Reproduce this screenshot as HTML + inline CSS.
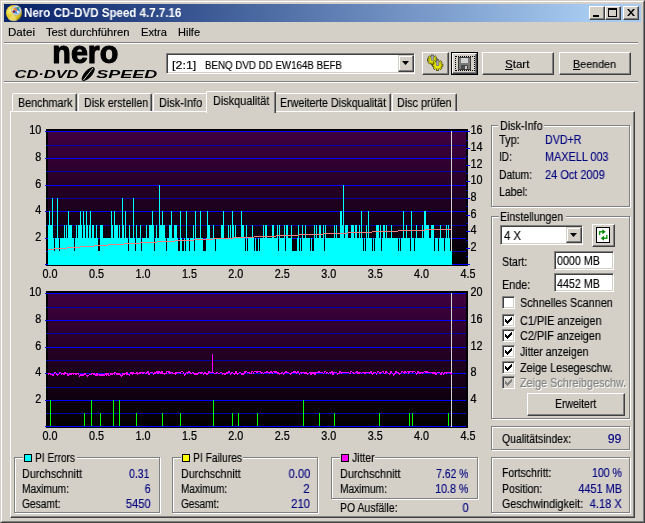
<!DOCTYPE html>
<html lang="de"><head><meta charset="utf-8"><title>Nero CD-DVD Speed 4.7.7.16</title>
<style>
*{box-sizing:border-box;margin:0;padding:0}
html,body{width:645px;height:523px;overflow:hidden;background:#d4d0c8}
body{position:relative;font-family:"Liberation Sans",sans-serif;font-size:12px;color:#000}
.a{position:absolute}
svg,#ttl{will-change:transform}
.t{-webkit-text-stroke:.15px;will-change:transform;position:absolute;white-space:nowrap;line-height:14px;font-size:12px;transform-origin:0 0;transform:scaleX(.92)}
.r{transform-origin:100% 0;text-align:right}
.m{font-size:11px;transform:none}
.v{color:#000080}
.grp{position:absolute;border:1px solid #808080;box-shadow:1px 1px 0 #fff, inset 1px 1px 0 #fff}
.lg{position:absolute;background:#d4d0c8;height:14px}
.btn{position:absolute;background:#d4d0c8;border:1px solid;border-color:#fff #404040 #404040 #fff;box-shadow:inset -1px -1px 0 #808080, inset 1px 1px 0 #d4d0c8}
.btn2{position:absolute;background:#d4d0c8;border:1px solid;border-color:#d4d0c8 #404040 #404040 #d4d0c8;box-shadow:inset -1px -1px 0 #808080, inset 1px 1px 0 #fff}
.sunk{position:absolute;background:#fff;border:1px solid;border-color:#808080 #fff #fff #808080;box-shadow:inset 1px 1px 0 #404040, inset -1px -1px 0 #d4d0c8}
.cb{position:absolute;width:13px;height:13px;background:#fff;border:1px solid;border-color:#808080 #fff #fff #808080;box-shadow:inset 1px 1px 0 #404040, inset -1px -1px 0 #d4d0c8}
.sep{position:absolute;height:2px;border-top:1px solid #808080;border-bottom:1px solid #fff}
.tab{position:absolute;background:#d4d0c8;border:1px solid;border-color:#fff #404040 transparent #fff;border-radius:2px 2px 0 0;box-shadow:inset -1px 0 0 #808080}
</style></head>
<body>
<div class="a" style="left:0;top:0;width:645px;height:523px;border:1px solid;border-color:#d4d0c8 #404040 #404040 #d4d0c8"></div>
<div class="a" style="left:1px;top:1px;width:643px;height:521px;border:1px solid;border-color:#fff #808080 #808080 #fff"></div>
<div class="a" style="left:4px;top:4px;width:637px;height:18px;background:linear-gradient(90deg,#0a246a 0%,#0a246a 3%,#a6caf0 92%,#a6caf0 100%)"></div>
<svg class="a" style="left:5px;top:4px" width="18" height="18" viewBox="0 0 18 18">
<defs><radialGradient id="g1" cx="30%" cy="35%" r="75%"><stop offset="0" stop-color="#fff68a"/><stop offset=".45" stop-color="#e6cf2a"/><stop offset=".8" stop-color="#d8c020"/><stop offset="1" stop-color="#8f7a10"/></radialGradient></defs>
<circle cx="9" cy="9" r="8" fill="url(#g1)"/>
<path d="M9 9 L3 15 A8 8 0 0 0 12 16.4z" fill="#f3e39a" opacity=".55"/>
<circle cx="11.3" cy="6.4" r="4.7" fill="#e6e8ee" stroke="#a9adb8" stroke-width=".9"/>
<circle cx="11.4" cy="6.5" r="3.3" fill="#2c8be0"/>
<path d="M9 4 L12.6 7.6" stroke="#ff7a4a" stroke-width="1.5"/><path d="M11.5 4.6 L9.8 6.4" stroke="#ff7a4a" stroke-width="1.2"/>
<circle cx="8.8" cy="7.6" r="1.2" fill="#a01010"/><circle cx="13.2" cy="4" r="1.1" fill="#2f9a3a"/><circle cx="8.5" cy="5.4" r=".8" fill="#ffe000"/><circle cx="12.9" cy="7.9" r="1.1" fill="#f4f8ff"/>
</svg>
<div class="a" style="left:23.7px;top:5px;font-weight:bold;font-size:12px;line-height:16px;color:#fff;white-space:nowrap;transform-origin:0 0;transform:scaleX(.963)" id="ttl">Nero CD-DVD Speed 4.7.7.16</div>
<div class="btn" style="left:589px;top:6px;width:16px;height:14px"></div>
<div class="btn" style="left:605px;top:6px;width:16px;height:14px"></div>
<div class="btn" style="left:623px;top:6px;width:16px;height:14px"></div>
<div class="a" style="left:593px;top:15px;width:6px;height:2px;background:#000"></div>
<div class="a" style="left:608px;top:8px;width:9px;height:9px;border:1px solid #000;border-top-width:2px"></div>
<svg class="a" style="left:627px;top:9px" width="8" height="7" viewBox="0 0 8 7"><path d="M0 0h2l2 2.5 2-2.5h2l-3 3.5 3 3.5h-2l-2-2.5-2 2.5h-2l3-3.5z" fill="#000"/></svg>
<div id="t1" class="t m" style="left:8.4px;top:25.0px;transform:scaleX(1.0511);">Datei</div>
<div id="t2" class="t m" style="left:45.9px;top:25.0px;transform:scaleX(1.0191);">Test durchführen</div>
<div id="t3" class="t m" style="left:140.9px;top:25.0px;transform:scaleX(1.0122);">Extra</div>
<div id="t4" class="t m" style="left:178.4px;top:25.0px;transform:scaleX(0.9993);">Hilfe</div>
<div class="sep" style="left:4px;top:42px;width:634px"></div>
<div class="sep" style="left:4px;top:81px;width:634px"></div>
<svg class="a" style="left:10px;top:44px" width="152" height="38" viewBox="0 0 152 38">
<text x="42.3" y="18.9" font-family="Liberation Sans,sans-serif" font-weight="bold" font-size="30.5" fill="#000" stroke="#000" stroke-width="1.1" stroke-linejoin="round" textLength="66" lengthAdjust="spacingAndGlyphs">nero</text>
<text x="4.5" y="34.3" font-family="Liberation Sans,sans-serif" font-weight="bold" font-style="italic" font-size="11" fill="#000" textLength="64" lengthAdjust="spacingAndGlyphs">CD·DVD</text>
<ellipse cx="78.2" cy="30" rx="8.8" ry="3.7" transform="rotate(-48 78.2 30)" fill="#000"/>
<path d="M73.5 36 L83 24" stroke="#d4d0c8" stroke-width="1"/>
<text x="86.3" y="34.3" font-family="Liberation Sans,sans-serif" font-weight="bold" font-style="italic" font-size="11" fill="#000" textLength="61" lengthAdjust="spacingAndGlyphs">SPEED</text>
</svg>
<div class="sunk" style="left:166px;top:53px;width:249px;height:21px"></div>
<div id="t5" class="t m" style="left:172.2px;top:57.5px;transform:scaleX(1.1352);">[2:1]</div>
<div id="t6" class="t m" style="left:205.4px;top:57.5px;transform:scaleX(0.8858);">BENQ DVD DD EW164B BEFB</div>
<div class="btn2" style="left:398px;top:55px;width:16px;height:17px"></div>
<svg class="a" style="left:402px;top:61px" width="7" height="4"><path d="M0 0h7l-3.5 4z" fill="#000"/></svg>
<div class="btn" style="left:422px;top:52px;width:27px;height:23px"></div>
<div class="a" style="left:451px;top:52px;width:27px;height:23px;border:1px solid #000"></div>
<div class="btn" style="left:452px;top:53px;width:25px;height:21px"></div>
<div class="btn" style="left:482px;top:52px;width:72px;height:23px"></div>
<div class="btn" style="left:559px;top:52px;width:72px;height:23px"></div>
<div id="t7" class="t m" style="left:505.0px;top:57.0px;transform:scaleX(1.0495);"><u>S</u>tart</div>
<div id="t8" class="t m" style="left:573.0px;top:57.0px;transform:scaleX(0.9782);"><u>B</u>eenden</div>
<svg class="a" style="left:422px;top:52px" width="27" height="23" viewBox="0 0 27 23"><g transform="translate(10.4,7.9)"><g fill="#e8e800" stroke="#2e2e00" stroke-width=".7"><rect x="-1.1" y="-4.9" width="2.2" height="2.2" transform="rotate(0)"/><rect x="-1.1" y="-4.9" width="2.2" height="2.2" transform="rotate(45)"/><rect x="-1.1" y="-4.9" width="2.2" height="2.2" transform="rotate(90)"/><rect x="-1.1" y="-4.9" width="2.2" height="2.2" transform="rotate(135)"/><rect x="-1.1" y="-4.9" width="2.2" height="2.2" transform="rotate(180)"/><rect x="-1.1" y="-4.9" width="2.2" height="2.2" transform="rotate(225)"/><rect x="-1.1" y="-4.9" width="2.2" height="2.2" transform="rotate(270)"/><rect x="-1.1" y="-4.9" width="2.2" height="2.2" transform="rotate(315)"/></g><circle r="3.4" fill="#e8e800" stroke="#8a8a00" stroke-width=".5"/><rect x="-1.3" y="-4.6" width="2.6" height="5.0" fill="#a8a8b8" stroke="#55556a" stroke-width=".5"/></g><g transform="translate(15.6,13.2)"><g fill="#e8e800" stroke="#2e2e00" stroke-width=".7"><rect x="-1.1" y="-5.3" width="2.2" height="2.2" transform="rotate(0)"/><rect x="-1.1" y="-5.3" width="2.2" height="2.2" transform="rotate(45)"/><rect x="-1.1" y="-5.3" width="2.2" height="2.2" transform="rotate(90)"/><rect x="-1.1" y="-5.3" width="2.2" height="2.2" transform="rotate(135)"/><rect x="-1.1" y="-5.3" width="2.2" height="2.2" transform="rotate(180)"/><rect x="-1.1" y="-5.3" width="2.2" height="2.2" transform="rotate(225)"/><rect x="-1.1" y="-5.3" width="2.2" height="2.2" transform="rotate(270)"/><rect x="-1.1" y="-5.3" width="2.2" height="2.2" transform="rotate(315)"/></g><circle r="3.8" fill="#e8e800" stroke="#8a8a00" stroke-width=".5"/><rect x="-1.3" y="-5.0" width="2.6" height="5.4" fill="#a8a8b8" stroke="#55556a" stroke-width=".5"/></g></svg>
<div class="a" style="left:455px;top:56px;width:20px;height:15px;border:1px dotted #000"></div>
<svg class="a" style="left:458px;top:56px" width="13" height="15" viewBox="0 0 13 15" shape-rendering="crispEdges">
<rect x="0" y="1" width="13" height="13" fill="#3a3a3a"/><rect x="1" y="2" width="11" height="11" fill="#7a7a7a"/>
<rect x="3" y="2" width="7" height="5" fill="#d2d2d2"/><rect x="3" y="9" width="7" height="4" fill="#4a4a4a"/><rect x="7" y="10" width="2" height="3" fill="#c8c8c8"/>
</svg>
<div class="tab" style="left:12px;top:93px;width:65px;height:19px"></div>
<div id="t9" class="t " style="left:18.0px;top:96px;transform:scaleX(0.8962);">Benchmark</div>
<div class="tab" style="left:78px;top:93px;width:74px;height:19px"></div>
<div id="t10" class="t " style="left:83.8px;top:96px;transform:scaleX(0.8913);">Disk erstellen</div>
<div class="tab" style="left:153px;top:93px;width:55px;height:19px"></div>
<div id="t11" class="t " style="left:158.8px;top:96px;transform:scaleX(0.9125);">Disk-Info</div>
<div class="tab" style="left:274px;top:93px;width:117px;height:19px"></div>
<div id="t12" class="t " style="left:279.6px;top:96px;transform:scaleX(0.8887);">Erweiterte Diskqualität</div>
<div class="tab" style="left:392px;top:93px;width:65px;height:19px"></div>
<div id="t13" class="t " style="left:397.2px;top:96px;transform:scaleX(0.8995);">Disc prüfen</div>
<div class="a" style="left:10px;top:111px;width:625px;height:407px;border:1px solid;border-color:#fff #404040 #404040 #fff;box-shadow:inset -1px -1px 0 #808080"></div>
<div class="tab" style="left:206px;top:91px;width:70px;height:22px;border-bottom:none"></div>
<div id="t14" class="t " style="left:212.7px;top:94px;transform:scaleX(0.9076);">Diskqualität</div>
<svg class="a" style="left:0;top:0" width="645" height="523" viewBox="0 0 645 523">
<defs><linearGradient id="bg" x1="0" y1="0" x2="0" y2="1"><stop offset="0" stop-color="#400040"/><stop offset="1" stop-color="#000000"/></linearGradient></defs>
<g shape-rendering="crispEdges">
<rect x="46" y="129" width="422" height="137" fill="#000"/>
<rect x="48" y="131" width="418" height="134" fill="url(#bg)"/>
<rect x="45" y="264" width="421" height="1" fill="#0000ff"/>
<rect x="46" y="251" width="420" height="1" fill="#0000a8"/>
<rect x="45" y="238" width="421" height="1" fill="#0000ff"/>
<rect x="46" y="225" width="420" height="1" fill="#0000a8"/>
<rect x="45" y="211" width="421" height="1" fill="#0000ff"/>
<rect x="46" y="198" width="420" height="1" fill="#0000a8"/>
<rect x="45" y="185" width="421" height="1" fill="#0000ff"/>
<rect x="46" y="171" width="420" height="1" fill="#0000a8"/>
<rect x="45" y="158" width="421" height="1" fill="#0000ff"/>
<rect x="46" y="145" width="420" height="1" fill="#0000a8"/>
<rect x="45" y="131" width="421" height="1" fill="#0000ff"/>
</g>
<g shape-rendering="crispEdges">
<rect x="451" y="131" width="1" height="134" fill="#d4d4d4"/>
<rect x="48" y="225" width="1" height="40" fill="#00ffff"/>
<rect x="49" y="211" width="1" height="54" fill="#00ffff"/>
<rect x="50" y="225" width="2" height="40" fill="#00ffff"/>
<rect x="52" y="198" width="1" height="67" fill="#00ffff"/>
<rect x="53" y="238" width="1" height="27" fill="#00ffff"/>
<rect x="54" y="251" width="1" height="14" fill="#00ffff"/>
<rect x="55" y="238" width="2" height="27" fill="#00ffff"/>
<rect x="57" y="198" width="1" height="67" fill="#00ffff"/>
<rect x="58" y="238" width="1" height="27" fill="#00ffff"/>
<rect x="59" y="251" width="1" height="14" fill="#00ffff"/>
<rect x="60" y="238" width="4" height="27" fill="#00ffff"/>
<rect x="64" y="225" width="1" height="40" fill="#00ffff"/>
<rect x="65" y="238" width="1" height="27" fill="#00ffff"/>
<rect x="66" y="225" width="1" height="40" fill="#00ffff"/>
<rect x="67" y="238" width="1" height="27" fill="#00ffff"/>
<rect x="68" y="211" width="1" height="54" fill="#00ffff"/>
<rect x="69" y="225" width="3" height="40" fill="#00ffff"/>
<rect x="72" y="238" width="2" height="27" fill="#00ffff"/>
<rect x="74" y="251" width="1" height="14" fill="#00ffff"/>
<rect x="75" y="238" width="1" height="27" fill="#00ffff"/>
<rect x="76" y="225" width="1" height="40" fill="#00ffff"/>
<rect x="77" y="238" width="1" height="27" fill="#00ffff"/>
<rect x="78" y="225" width="2" height="40" fill="#00ffff"/>
<rect x="80" y="211" width="1" height="54" fill="#00ffff"/>
<rect x="81" y="225" width="1" height="40" fill="#00ffff"/>
<rect x="82" y="238" width="1" height="27" fill="#00ffff"/>
<rect x="83" y="211" width="1" height="54" fill="#00ffff"/>
<rect x="84" y="225" width="1" height="40" fill="#00ffff"/>
<rect x="85" y="238" width="1" height="27" fill="#00ffff"/>
<rect x="86" y="211" width="1" height="54" fill="#00ffff"/>
<rect x="87" y="225" width="1" height="40" fill="#00ffff"/>
<rect x="88" y="238" width="1" height="27" fill="#00ffff"/>
<rect x="89" y="225" width="1" height="40" fill="#00ffff"/>
<rect x="90" y="211" width="1" height="54" fill="#00ffff"/>
<rect x="91" y="238" width="1" height="27" fill="#00ffff"/>
<rect x="92" y="225" width="2" height="40" fill="#00ffff"/>
<rect x="94" y="238" width="2" height="27" fill="#00ffff"/>
<rect x="96" y="225" width="1" height="40" fill="#00ffff"/>
<rect x="97" y="238" width="1" height="27" fill="#00ffff"/>
<rect x="98" y="251" width="2" height="14" fill="#00ffff"/>
<rect x="100" y="225" width="3" height="40" fill="#00ffff"/>
<rect x="103" y="238" width="8" height="27" fill="#00ffff"/>
<rect x="111" y="211" width="1" height="54" fill="#00ffff"/>
<rect x="112" y="225" width="1" height="40" fill="#00ffff"/>
<rect x="113" y="238" width="1" height="27" fill="#00ffff"/>
<rect x="114" y="211" width="1" height="54" fill="#00ffff"/>
<rect x="115" y="225" width="3" height="40" fill="#00ffff"/>
<rect x="118" y="238" width="1" height="27" fill="#00ffff"/>
<rect x="119" y="225" width="1" height="40" fill="#00ffff"/>
<rect x="120" y="238" width="2" height="27" fill="#00ffff"/>
<rect x="122" y="198" width="1" height="67" fill="#00ffff"/>
<rect x="123" y="225" width="1" height="40" fill="#00ffff"/>
<rect x="124" y="238" width="1" height="27" fill="#00ffff"/>
<rect x="125" y="211" width="1" height="54" fill="#00ffff"/>
<rect x="126" y="238" width="2" height="27" fill="#00ffff"/>
<rect x="128" y="251" width="1" height="14" fill="#00ffff"/>
<rect x="129" y="225" width="1" height="40" fill="#00ffff"/>
<rect x="130" y="238" width="3" height="27" fill="#00ffff"/>
<rect x="133" y="198" width="1" height="67" fill="#00ffff"/>
<rect x="134" y="238" width="1" height="27" fill="#00ffff"/>
<rect x="135" y="251" width="1" height="14" fill="#00ffff"/>
<rect x="136" y="225" width="1" height="40" fill="#00ffff"/>
<rect x="137" y="238" width="3" height="27" fill="#00ffff"/>
<rect x="140" y="225" width="1" height="40" fill="#00ffff"/>
<rect x="141" y="251" width="1" height="14" fill="#00ffff"/>
<rect x="142" y="238" width="4" height="27" fill="#00ffff"/>
<rect x="146" y="225" width="1" height="40" fill="#00ffff"/>
<rect x="147" y="238" width="2" height="27" fill="#00ffff"/>
<rect x="149" y="225" width="3" height="40" fill="#00ffff"/>
<rect x="152" y="211" width="1" height="54" fill="#00ffff"/>
<rect x="153" y="225" width="1" height="40" fill="#00ffff"/>
<rect x="154" y="251" width="1" height="14" fill="#00ffff"/>
<rect x="155" y="238" width="1" height="27" fill="#00ffff"/>
<rect x="156" y="225" width="1" height="40" fill="#00ffff"/>
<rect x="157" y="238" width="2" height="27" fill="#00ffff"/>
<rect x="159" y="185" width="1" height="80" fill="#00ffff"/>
<rect x="160" y="225" width="2" height="40" fill="#00ffff"/>
<rect x="162" y="211" width="1" height="54" fill="#00ffff"/>
<rect x="163" y="225" width="2" height="40" fill="#00ffff"/>
<rect x="165" y="238" width="1" height="27" fill="#00ffff"/>
<rect x="166" y="251" width="1" height="14" fill="#00ffff"/>
<rect x="167" y="238" width="2" height="27" fill="#00ffff"/>
<rect x="169" y="225" width="2" height="40" fill="#00ffff"/>
<rect x="171" y="211" width="1" height="54" fill="#00ffff"/>
<rect x="172" y="238" width="2" height="27" fill="#00ffff"/>
<rect x="174" y="225" width="3" height="40" fill="#00ffff"/>
<rect x="177" y="238" width="1" height="27" fill="#00ffff"/>
<rect x="178" y="251" width="2" height="14" fill="#00ffff"/>
<rect x="180" y="211" width="1" height="54" fill="#00ffff"/>
<rect x="181" y="238" width="1" height="27" fill="#00ffff"/>
<rect x="182" y="251" width="2" height="14" fill="#00ffff"/>
<rect x="184" y="238" width="1" height="27" fill="#00ffff"/>
<rect x="185" y="251" width="1" height="14" fill="#00ffff"/>
<rect x="186" y="211" width="1" height="54" fill="#00ffff"/>
<rect x="187" y="238" width="2" height="27" fill="#00ffff"/>
<rect x="189" y="251" width="1" height="14" fill="#00ffff"/>
<rect x="190" y="238" width="3" height="27" fill="#00ffff"/>
<rect x="193" y="225" width="1" height="40" fill="#00ffff"/>
<rect x="194" y="251" width="1" height="14" fill="#00ffff"/>
<rect x="195" y="211" width="1" height="54" fill="#00ffff"/>
<rect x="196" y="238" width="4" height="27" fill="#00ffff"/>
<rect x="200" y="211" width="1" height="54" fill="#00ffff"/>
<rect x="201" y="238" width="2" height="27" fill="#00ffff"/>
<rect x="203" y="251" width="3" height="14" fill="#00ffff"/>
<rect x="206" y="238" width="1" height="27" fill="#00ffff"/>
<rect x="207" y="211" width="1" height="54" fill="#00ffff"/>
<rect x="208" y="225" width="2" height="40" fill="#00ffff"/>
<rect x="210" y="238" width="3" height="27" fill="#00ffff"/>
<rect x="213" y="225" width="1" height="40" fill="#00ffff"/>
<rect x="214" y="238" width="1" height="27" fill="#00ffff"/>
<rect x="215" y="251" width="1" height="14" fill="#00ffff"/>
<rect x="216" y="238" width="5" height="27" fill="#00ffff"/>
<rect x="221" y="225" width="2" height="40" fill="#00ffff"/>
<rect x="223" y="211" width="1" height="54" fill="#00ffff"/>
<rect x="224" y="238" width="4" height="27" fill="#00ffff"/>
<rect x="228" y="225" width="1" height="40" fill="#00ffff"/>
<rect x="229" y="238" width="1" height="27" fill="#00ffff"/>
<rect x="230" y="225" width="1" height="40" fill="#00ffff"/>
<rect x="231" y="238" width="1" height="27" fill="#00ffff"/>
<rect x="232" y="211" width="1" height="54" fill="#00ffff"/>
<rect x="233" y="225" width="1" height="40" fill="#00ffff"/>
<rect x="234" y="238" width="1" height="27" fill="#00ffff"/>
<rect x="235" y="225" width="1" height="40" fill="#00ffff"/>
<rect x="236" y="238" width="5" height="27" fill="#00ffff"/>
<rect x="241" y="211" width="1" height="54" fill="#00ffff"/>
<rect x="242" y="225" width="2" height="40" fill="#00ffff"/>
<rect x="244" y="238" width="1" height="27" fill="#00ffff"/>
<rect x="245" y="251" width="1" height="14" fill="#00ffff"/>
<rect x="246" y="225" width="1" height="40" fill="#00ffff"/>
<rect x="247" y="251" width="1" height="14" fill="#00ffff"/>
<rect x="248" y="238" width="4" height="27" fill="#00ffff"/>
<rect x="252" y="225" width="1" height="40" fill="#00ffff"/>
<rect x="253" y="238" width="1" height="27" fill="#00ffff"/>
<rect x="254" y="251" width="1" height="14" fill="#00ffff"/>
<rect x="255" y="238" width="1" height="27" fill="#00ffff"/>
<rect x="256" y="251" width="2" height="14" fill="#00ffff"/>
<rect x="258" y="238" width="1" height="27" fill="#00ffff"/>
<rect x="259" y="251" width="1" height="14" fill="#00ffff"/>
<rect x="260" y="238" width="3" height="27" fill="#00ffff"/>
<rect x="263" y="225" width="1" height="40" fill="#00ffff"/>
<rect x="264" y="238" width="1" height="27" fill="#00ffff"/>
<rect x="265" y="225" width="2" height="40" fill="#00ffff"/>
<rect x="267" y="238" width="5" height="27" fill="#00ffff"/>
<rect x="272" y="225" width="2" height="40" fill="#00ffff"/>
<rect x="274" y="238" width="3" height="27" fill="#00ffff"/>
<rect x="277" y="225" width="1" height="40" fill="#00ffff"/>
<rect x="278" y="251" width="1" height="14" fill="#00ffff"/>
<rect x="279" y="225" width="1" height="40" fill="#00ffff"/>
<rect x="280" y="238" width="4" height="27" fill="#00ffff"/>
<rect x="284" y="225" width="1" height="40" fill="#00ffff"/>
<rect x="285" y="251" width="1" height="14" fill="#00ffff"/>
<rect x="286" y="225" width="2" height="40" fill="#00ffff"/>
<rect x="288" y="238" width="3" height="27" fill="#00ffff"/>
<rect x="291" y="225" width="1" height="40" fill="#00ffff"/>
<rect x="292" y="251" width="5" height="14" fill="#00ffff"/>
<rect x="297" y="238" width="1" height="27" fill="#00ffff"/>
<rect x="298" y="225" width="1" height="40" fill="#00ffff"/>
<rect x="299" y="251" width="1" height="14" fill="#00ffff"/>
<rect x="300" y="238" width="1" height="27" fill="#00ffff"/>
<rect x="301" y="251" width="1" height="14" fill="#00ffff"/>
<rect x="302" y="225" width="1" height="40" fill="#00ffff"/>
<rect x="303" y="238" width="2" height="27" fill="#00ffff"/>
<rect x="305" y="225" width="1" height="40" fill="#00ffff"/>
<rect x="306" y="238" width="4" height="27" fill="#00ffff"/>
<rect x="310" y="251" width="1" height="14" fill="#00ffff"/>
<rect x="311" y="238" width="1" height="27" fill="#00ffff"/>
<rect x="312" y="251" width="2" height="14" fill="#00ffff"/>
<rect x="314" y="225" width="1" height="40" fill="#00ffff"/>
<rect x="315" y="238" width="1" height="27" fill="#00ffff"/>
<rect x="316" y="225" width="1" height="40" fill="#00ffff"/>
<rect x="317" y="238" width="2" height="27" fill="#00ffff"/>
<rect x="319" y="225" width="2" height="40" fill="#00ffff"/>
<rect x="321" y="238" width="2" height="27" fill="#00ffff"/>
<rect x="323" y="225" width="1" height="40" fill="#00ffff"/>
<rect x="324" y="251" width="1" height="14" fill="#00ffff"/>
<rect x="325" y="225" width="1" height="40" fill="#00ffff"/>
<rect x="326" y="238" width="8" height="27" fill="#00ffff"/>
<rect x="334" y="225" width="1" height="40" fill="#00ffff"/>
<rect x="335" y="238" width="1" height="27" fill="#00ffff"/>
<rect x="336" y="225" width="1" height="40" fill="#00ffff"/>
<rect x="337" y="238" width="3" height="27" fill="#00ffff"/>
<rect x="340" y="211" width="2" height="54" fill="#00ffff"/>
<rect x="342" y="225" width="1" height="40" fill="#00ffff"/>
<rect x="343" y="185" width="1" height="80" fill="#00ffff"/>
<rect x="344" y="238" width="1" height="27" fill="#00ffff"/>
<rect x="345" y="225" width="3" height="40" fill="#00ffff"/>
<rect x="348" y="238" width="3" height="27" fill="#00ffff"/>
<rect x="351" y="225" width="3" height="40" fill="#00ffff"/>
<rect x="354" y="238" width="1" height="27" fill="#00ffff"/>
<rect x="355" y="225" width="2" height="40" fill="#00ffff"/>
<rect x="357" y="238" width="2" height="27" fill="#00ffff"/>
<rect x="359" y="225" width="1" height="40" fill="#00ffff"/>
<rect x="360" y="238" width="1" height="27" fill="#00ffff"/>
<rect x="361" y="211" width="1" height="54" fill="#00ffff"/>
<rect x="362" y="238" width="1" height="27" fill="#00ffff"/>
<rect x="363" y="251" width="1" height="14" fill="#00ffff"/>
<rect x="364" y="238" width="1" height="27" fill="#00ffff"/>
<rect x="365" y="251" width="1" height="14" fill="#00ffff"/>
<rect x="366" y="225" width="1" height="40" fill="#00ffff"/>
<rect x="367" y="238" width="1" height="27" fill="#00ffff"/>
<rect x="368" y="211" width="1" height="54" fill="#00ffff"/>
<rect x="369" y="238" width="3" height="27" fill="#00ffff"/>
<rect x="372" y="251" width="1" height="14" fill="#00ffff"/>
<rect x="373" y="238" width="1" height="27" fill="#00ffff"/>
<rect x="374" y="251" width="1" height="14" fill="#00ffff"/>
<rect x="375" y="238" width="1" height="27" fill="#00ffff"/>
<rect x="376" y="225" width="3" height="40" fill="#00ffff"/>
<rect x="379" y="238" width="1" height="27" fill="#00ffff"/>
<rect x="380" y="225" width="1" height="40" fill="#00ffff"/>
<rect x="381" y="251" width="1" height="14" fill="#00ffff"/>
<rect x="382" y="238" width="1" height="27" fill="#00ffff"/>
<rect x="383" y="225" width="2" height="40" fill="#00ffff"/>
<rect x="385" y="238" width="1" height="27" fill="#00ffff"/>
<rect x="386" y="225" width="1" height="40" fill="#00ffff"/>
<rect x="387" y="238" width="4" height="27" fill="#00ffff"/>
<rect x="391" y="225" width="1" height="40" fill="#00ffff"/>
<rect x="392" y="238" width="6" height="27" fill="#00ffff"/>
<rect x="398" y="251" width="1" height="14" fill="#00ffff"/>
<rect x="399" y="238" width="1" height="27" fill="#00ffff"/>
<rect x="400" y="251" width="1" height="14" fill="#00ffff"/>
<rect x="401" y="238" width="2" height="27" fill="#00ffff"/>
<rect x="403" y="211" width="1" height="54" fill="#00ffff"/>
<rect x="404" y="238" width="2" height="27" fill="#00ffff"/>
<rect x="406" y="225" width="1" height="40" fill="#00ffff"/>
<rect x="407" y="238" width="3" height="27" fill="#00ffff"/>
<rect x="410" y="251" width="1" height="14" fill="#00ffff"/>
<rect x="411" y="211" width="1" height="54" fill="#00ffff"/>
<rect x="412" y="238" width="2" height="27" fill="#00ffff"/>
<rect x="414" y="251" width="1" height="14" fill="#00ffff"/>
<rect x="415" y="238" width="1" height="27" fill="#00ffff"/>
<rect x="416" y="225" width="1" height="40" fill="#00ffff"/>
<rect x="417" y="238" width="5" height="27" fill="#00ffff"/>
<rect x="422" y="225" width="1" height="40" fill="#00ffff"/>
<rect x="423" y="238" width="1" height="27" fill="#00ffff"/>
<rect x="424" y="211" width="2" height="54" fill="#00ffff"/>
<rect x="426" y="225" width="3" height="40" fill="#00ffff"/>
<rect x="429" y="238" width="2" height="27" fill="#00ffff"/>
<rect x="431" y="225" width="3" height="40" fill="#00ffff"/>
<rect x="434" y="251" width="1" height="14" fill="#00ffff"/>
<rect x="435" y="238" width="3" height="27" fill="#00ffff"/>
<rect x="438" y="251" width="1" height="14" fill="#00ffff"/>
<rect x="439" y="238" width="1" height="27" fill="#00ffff"/>
<rect x="440" y="225" width="1" height="40" fill="#00ffff"/>
<rect x="441" y="238" width="3" height="27" fill="#00ffff"/>
<rect x="444" y="251" width="1" height="14" fill="#00ffff"/>
<rect x="445" y="238" width="1" height="27" fill="#00ffff"/>
<rect x="446" y="225" width="1" height="40" fill="#00ffff"/>
<rect x="447" y="238" width="1" height="27" fill="#00ffff"/>
<rect x="448" y="225" width="1" height="40" fill="#00ffff"/>
<rect x="449" y="238" width="1" height="27" fill="#00ffff"/>
<rect x="450" y="251" width="2" height="14" fill="#00ffff"/>
</g>
<g shape-rendering="crispEdges" fill="#f08080">
<rect x="48" y="249" width="6" height="1"/>
<rect x="54" y="248" width="13" height="1"/>
<rect x="67" y="247" width="13" height="1"/>
<rect x="80" y="246" width="14" height="1"/>
<rect x="94" y="245" width="14" height="1"/>
<rect x="108" y="244" width="16" height="1"/>
<rect x="124" y="243" width="16" height="1"/>
<rect x="140" y="242" width="17" height="1"/>
<rect x="157" y="241" width="18" height="1"/>
<rect x="175" y="240" width="19" height="1"/>
<rect x="194" y="239" width="19" height="1"/>
<rect x="213" y="238" width="20" height="1"/>
<rect x="233" y="237" width="21" height="1"/>
<rect x="254" y="236" width="22" height="1"/>
<rect x="276" y="235" width="23" height="1"/>
<rect x="299" y="234" width="24" height="1"/>
<rect x="323" y="233" width="24" height="1"/>
<rect x="347" y="232" width="25" height="1"/>
<rect x="372" y="231" width="26" height="1"/>
<rect x="398" y="230" width="27" height="1"/>
<rect x="425" y="229" width="26" height="1"/>
</g>
<g shape-rendering="crispEdges">
<rect x="466" y="256" width="2" height="1" fill="#0000c0"/>
<rect x="466" y="240" width="2" height="1" fill="#0000c0"/>
<rect x="466" y="223" width="2" height="1" fill="#0000c0"/>
<rect x="466" y="206" width="2" height="1" fill="#0000c0"/>
<rect x="466" y="190" width="2" height="1" fill="#0000c0"/>
<rect x="466" y="173" width="2" height="1" fill="#0000c0"/>
<rect x="466" y="156" width="2" height="1" fill="#0000c0"/>
<rect x="466" y="140" width="2" height="1" fill="#0000c0"/>
<rect x="466" y="264" width="4" height="1" fill="#0000ff"/>
<rect x="466" y="248" width="4" height="1" fill="#0000ff"/>
<rect x="466" y="231" width="4" height="1" fill="#0000ff"/>
<rect x="466" y="215" width="4" height="1" fill="#0000ff"/>
<rect x="466" y="198" width="4" height="1" fill="#0000ff"/>
<rect x="466" y="181" width="4" height="1" fill="#0000ff"/>
<rect x="466" y="165" width="4" height="1" fill="#0000ff"/>
<rect x="466" y="148" width="4" height="1" fill="#0000ff"/>
<rect x="466" y="131" width="4" height="1" fill="#0000ff"/>
</g>
<text transform="translate(41.3,240.8) scale(.9,1)" text-anchor="end" font-family="Liberation Sans,sans-serif" font-size="12" fill="#000" stroke="#000" stroke-width=".25">2</text>
<text transform="translate(41.3,213.8) scale(.9,1)" text-anchor="end" font-family="Liberation Sans,sans-serif" font-size="12" fill="#000" stroke="#000" stroke-width=".25">4</text>
<text transform="translate(41.3,187.8) scale(.9,1)" text-anchor="end" font-family="Liberation Sans,sans-serif" font-size="12" fill="#000" stroke="#000" stroke-width=".25">6</text>
<text transform="translate(41.3,160.8) scale(.9,1)" text-anchor="end" font-family="Liberation Sans,sans-serif" font-size="12" fill="#000" stroke="#000" stroke-width=".25">8</text>
<text transform="translate(41.3,133.8) scale(.9,1)" text-anchor="end" font-family="Liberation Sans,sans-serif" font-size="12" fill="#000" stroke="#000" stroke-width=".25">10</text>
<text transform="translate(470.6,250.8) scale(.9,1)" font-family="Liberation Sans,sans-serif" font-size="12" fill="#000" stroke="#000" stroke-width=".25">2</text>
<text transform="translate(470.6,233.8) scale(.9,1)" font-family="Liberation Sans,sans-serif" font-size="12" fill="#000" stroke="#000" stroke-width=".25">4</text>
<text transform="translate(470.6,217.8) scale(.9,1)" font-family="Liberation Sans,sans-serif" font-size="12" fill="#000" stroke="#000" stroke-width=".25">6</text>
<text transform="translate(470.6,200.8) scale(.9,1)" font-family="Liberation Sans,sans-serif" font-size="12" fill="#000" stroke="#000" stroke-width=".25">8</text>
<text transform="translate(470.6,183.8) scale(.9,1)" font-family="Liberation Sans,sans-serif" font-size="12" fill="#000" stroke="#000" stroke-width=".25">10</text>
<text transform="translate(470.6,167.8) scale(.9,1)" font-family="Liberation Sans,sans-serif" font-size="12" fill="#000" stroke="#000" stroke-width=".25">12</text>
<text transform="translate(470.6,150.8) scale(.9,1)" font-family="Liberation Sans,sans-serif" font-size="12" fill="#000" stroke="#000" stroke-width=".25">14</text>
<text transform="translate(470.6,133.8) scale(.9,1)" font-family="Liberation Sans,sans-serif" font-size="12" fill="#000" stroke="#000" stroke-width=".25">16</text>
<text transform="translate(50.0,277.8) scale(.9,1)" text-anchor="middle" font-family="Liberation Sans,sans-serif" font-size="12" fill="#000" stroke="#000" stroke-width=".25">0.0</text>
<text transform="translate(96.5,277.8) scale(.9,1)" text-anchor="middle" font-family="Liberation Sans,sans-serif" font-size="12" fill="#000" stroke="#000" stroke-width=".25">0.5</text>
<text transform="translate(142.9,277.8) scale(.9,1)" text-anchor="middle" font-family="Liberation Sans,sans-serif" font-size="12" fill="#000" stroke="#000" stroke-width=".25">1.0</text>
<text transform="translate(189.4,277.8) scale(.9,1)" text-anchor="middle" font-family="Liberation Sans,sans-serif" font-size="12" fill="#000" stroke="#000" stroke-width=".25">1.5</text>
<text transform="translate(235.8,277.8) scale(.9,1)" text-anchor="middle" font-family="Liberation Sans,sans-serif" font-size="12" fill="#000" stroke="#000" stroke-width=".25">2.0</text>
<text transform="translate(282.2,277.8) scale(.9,1)" text-anchor="middle" font-family="Liberation Sans,sans-serif" font-size="12" fill="#000" stroke="#000" stroke-width=".25">2.5</text>
<text transform="translate(328.7,277.8) scale(.9,1)" text-anchor="middle" font-family="Liberation Sans,sans-serif" font-size="12" fill="#000" stroke="#000" stroke-width=".25">3.0</text>
<text transform="translate(375.2,277.8) scale(.9,1)" text-anchor="middle" font-family="Liberation Sans,sans-serif" font-size="12" fill="#000" stroke="#000" stroke-width=".25">3.5</text>
<text transform="translate(421.6,277.8) scale(.9,1)" text-anchor="middle" font-family="Liberation Sans,sans-serif" font-size="12" fill="#000" stroke="#000" stroke-width=".25">4.0</text>
<text transform="translate(468.1,277.8) scale(.9,1)" text-anchor="middle" font-family="Liberation Sans,sans-serif" font-size="12" fill="#000" stroke="#000" stroke-width=".25">4.5</text>
<g shape-rendering="crispEdges">
<rect x="46" y="291" width="422" height="137" fill="#000"/>
<rect x="48" y="293" width="418" height="134" fill="url(#bg)"/>
<rect x="45" y="426" width="421" height="1" fill="#0000ff"/>
<rect x="46" y="413" width="420" height="1" fill="#0000a8"/>
<rect x="45" y="400" width="421" height="1" fill="#0000ff"/>
<rect x="46" y="387" width="420" height="1" fill="#0000a8"/>
<rect x="45" y="373" width="421" height="1" fill="#0000ff"/>
<rect x="46" y="360" width="420" height="1" fill="#0000a8"/>
<rect x="45" y="347" width="421" height="1" fill="#0000ff"/>
<rect x="46" y="333" width="420" height="1" fill="#0000a8"/>
<rect x="45" y="320" width="421" height="1" fill="#0000ff"/>
<rect x="46" y="307" width="420" height="1" fill="#0000a8"/>
<rect x="45" y="293" width="421" height="1" fill="#0000ff"/>
</g>
<g shape-rendering="crispEdges">
<rect x="451" y="293" width="1" height="134" fill="#d4d4d4"/>
<rect x="50" y="400" width="1" height="26" fill="#00ff00"/>
<rect x="84" y="413" width="1" height="13" fill="#00ff00"/>
<rect x="91" y="400" width="1" height="26" fill="#00ff00"/>
<rect x="100" y="413" width="1" height="13" fill="#00ff00"/>
<rect x="113" y="400" width="1" height="26" fill="#00ff00"/>
<rect x="119" y="400" width="1" height="26" fill="#00ff00"/>
<rect x="136" y="413" width="1" height="13" fill="#00ff00"/>
<rect x="162" y="413" width="1" height="13" fill="#00ff00"/>
<rect x="180" y="413" width="1" height="13" fill="#00ff00"/>
<rect x="213" y="400" width="1" height="26" fill="#00ff00"/>
<rect x="232" y="413" width="1" height="13" fill="#00ff00"/>
<rect x="238" y="413" width="1" height="13" fill="#00ff00"/>
<rect x="257" y="413" width="1" height="13" fill="#00ff00"/>
<rect x="303" y="400" width="1" height="26" fill="#00ff00"/>
<rect x="319" y="413" width="1" height="13" fill="#00ff00"/>
<rect x="334" y="413" width="1" height="13" fill="#00ff00"/>
<rect x="379" y="413" width="1" height="13" fill="#00ff00"/>
<rect x="409" y="413" width="1" height="13" fill="#00ff00"/>
<rect x="412" y="413" width="1" height="13" fill="#00ff00"/>
<rect x="448" y="413" width="1" height="13" fill="#00ff00"/>
</g>
<g shape-rendering="crispEdges" fill="#ff00ff">
<rect x="48" y="373" width="1" height="2"/>
<rect x="49" y="373" width="1" height="1"/>
<rect x="50" y="373" width="1" height="2"/>
<rect x="51" y="374" width="1" height="1"/>
<rect x="52" y="374" width="1" height="2"/>
<rect x="53" y="374" width="1" height="2"/>
<rect x="54" y="372" width="1" height="2"/>
<rect x="55" y="372" width="1" height="1"/>
<rect x="56" y="373" width="1" height="2"/>
<rect x="57" y="374" width="1" height="2"/>
<rect x="58" y="374" width="1" height="1"/>
<rect x="59" y="372" width="1" height="2"/>
<rect x="60" y="372" width="1" height="1"/>
<rect x="61" y="373" width="1" height="2"/>
<rect x="62" y="373" width="1" height="1"/>
<rect x="63" y="373" width="1" height="2"/>
<rect x="64" y="372" width="1" height="3"/>
<rect x="65" y="372" width="1" height="2"/>
<rect x="66" y="373" width="1" height="1"/>
<rect x="67" y="373" width="1" height="3"/>
<rect x="68" y="374" width="1" height="2"/>
<rect x="69" y="373" width="1" height="2"/>
<rect x="70" y="373" width="1" height="2"/>
<rect x="71" y="373" width="1" height="2"/>
<rect x="72" y="373" width="1" height="1"/>
<rect x="73" y="373" width="1" height="2"/>
<rect x="74" y="373" width="1" height="1"/>
<rect x="75" y="373" width="1" height="2"/>
<rect x="76" y="373" width="1" height="2"/>
<rect x="77" y="373" width="1" height="1"/>
<rect x="78" y="373" width="1" height="2"/>
<rect x="79" y="375" width="1" height="2"/>
<rect x="80" y="374" width="1" height="2"/>
<rect x="81" y="374" width="1" height="2"/>
<rect x="82" y="374" width="1" height="2"/>
<rect x="83" y="374" width="1" height="2"/>
<rect x="84" y="373" width="1" height="2"/>
<rect x="85" y="373" width="1" height="2"/>
<rect x="86" y="375" width="1" height="1"/>
<rect x="87" y="375" width="1" height="2"/>
<rect x="88" y="375" width="1" height="1"/>
<rect x="89" y="374" width="1" height="1"/>
<rect x="90" y="374" width="1" height="1"/>
<rect x="91" y="373" width="1" height="2"/>
<rect x="92" y="373" width="1" height="1"/>
<rect x="93" y="373" width="1" height="2"/>
<rect x="94" y="373" width="1" height="2"/>
<rect x="95" y="374" width="1" height="2"/>
<rect x="96" y="373" width="1" height="3"/>
<rect x="97" y="373" width="1" height="3"/>
<rect x="98" y="374" width="1" height="1"/>
<rect x="99" y="374" width="1" height="2"/>
<rect x="100" y="374" width="1" height="2"/>
<rect x="101" y="374" width="1" height="2"/>
<rect x="102" y="374" width="1" height="2"/>
<rect x="103" y="374" width="1" height="2"/>
<rect x="104" y="374" width="1" height="2"/>
<rect x="105" y="373" width="1" height="2"/>
<rect x="106" y="373" width="1" height="3"/>
<rect x="107" y="373" width="1" height="2"/>
<rect x="108" y="373" width="1" height="3"/>
<rect x="109" y="375" width="1" height="1"/>
<rect x="110" y="373" width="1" height="2"/>
<rect x="111" y="373" width="1" height="2"/>
<rect x="112" y="373" width="1" height="2"/>
<rect x="113" y="373" width="1" height="1"/>
<rect x="114" y="372" width="1" height="3"/>
<rect x="115" y="372" width="1" height="1"/>
<rect x="116" y="373" width="1" height="2"/>
<rect x="117" y="373" width="1" height="2"/>
<rect x="118" y="373" width="1" height="2"/>
<rect x="119" y="373" width="1" height="2"/>
<rect x="120" y="374" width="1" height="2"/>
<rect x="121" y="375" width="1" height="2"/>
<rect x="122" y="373" width="1" height="3"/>
<rect x="123" y="373" width="1" height="2"/>
<rect x="124" y="373" width="1" height="2"/>
<rect x="125" y="373" width="1" height="1"/>
<rect x="126" y="372" width="1" height="3"/>
<rect x="127" y="372" width="1" height="3"/>
<rect x="128" y="374" width="1" height="1"/>
<rect x="129" y="374" width="1" height="2"/>
<rect x="130" y="372" width="1" height="2"/>
<rect x="131" y="372" width="1" height="2"/>
<rect x="132" y="372" width="1" height="3"/>
<rect x="133" y="372" width="1" height="2"/>
<rect x="134" y="373" width="1" height="1"/>
<rect x="135" y="373" width="1" height="1"/>
<rect x="136" y="372" width="1" height="2"/>
<rect x="137" y="372" width="1" height="3"/>
<rect x="138" y="373" width="1" height="1"/>
<rect x="139" y="372" width="1" height="2"/>
<rect x="140" y="372" width="1" height="2"/>
<rect x="141" y="372" width="1" height="1"/>
<rect x="142" y="372" width="1" height="2"/>
<rect x="143" y="372" width="1" height="2"/>
<rect x="144" y="372" width="1" height="1"/>
<rect x="145" y="373" width="1" height="1"/>
<rect x="146" y="372" width="1" height="2"/>
<rect x="147" y="371" width="1" height="2"/>
<rect x="148" y="371" width="1" height="4"/>
<rect x="149" y="373" width="1" height="2"/>
<rect x="150" y="372" width="1" height="1"/>
<rect x="151" y="372" width="1" height="1"/>
<rect x="152" y="372" width="1" height="1"/>
<rect x="153" y="373" width="1" height="2"/>
<rect x="154" y="372" width="1" height="2"/>
<rect x="155" y="372" width="1" height="2"/>
<rect x="156" y="371" width="1" height="2"/>
<rect x="157" y="371" width="1" height="3"/>
<rect x="158" y="371" width="1" height="3"/>
<rect x="159" y="371" width="1" height="2"/>
<rect x="160" y="372" width="1" height="2"/>
<rect x="161" y="371" width="1" height="3"/>
<rect x="162" y="371" width="1" height="3"/>
<rect x="163" y="373" width="1" height="1"/>
<rect x="164" y="373" width="1" height="2"/>
<rect x="165" y="373" width="1" height="1"/>
<rect x="166" y="371" width="1" height="3"/>
<rect x="167" y="371" width="1" height="1"/>
<rect x="168" y="371" width="1" height="2"/>
<rect x="169" y="371" width="1" height="3"/>
<rect x="170" y="372" width="1" height="2"/>
<rect x="171" y="372" width="1" height="1"/>
<rect x="172" y="372" width="1" height="2"/>
<rect x="173" y="373" width="1" height="1"/>
<rect x="174" y="373" width="1" height="1"/>
<rect x="175" y="372" width="1" height="3"/>
<rect x="176" y="372" width="1" height="2"/>
<rect x="177" y="372" width="1" height="1"/>
<rect x="178" y="372" width="1" height="1"/>
<rect x="179" y="372" width="1" height="1"/>
<rect x="180" y="372" width="1" height="2"/>
<rect x="181" y="371" width="1" height="1"/>
<rect x="182" y="371" width="1" height="1"/>
<rect x="183" y="372" width="1" height="2"/>
<rect x="184" y="374" width="1" height="2"/>
<rect x="185" y="373" width="1" height="2"/>
<rect x="186" y="372" width="1" height="1"/>
<rect x="187" y="372" width="1" height="2"/>
<rect x="188" y="371" width="1" height="2"/>
<rect x="189" y="371" width="1" height="2"/>
<rect x="190" y="372" width="1" height="2"/>
<rect x="191" y="373" width="1" height="1"/>
<rect x="192" y="372" width="1" height="1"/>
<rect x="193" y="372" width="1" height="2"/>
<rect x="194" y="373" width="1" height="2"/>
<rect x="195" y="373" width="1" height="2"/>
<rect x="196" y="373" width="1" height="2"/>
<rect x="197" y="373" width="1" height="2"/>
<rect x="198" y="372" width="1" height="2"/>
<rect x="199" y="372" width="1" height="1"/>
<rect x="200" y="372" width="1" height="2"/>
<rect x="201" y="372" width="1" height="2"/>
<rect x="202" y="372" width="1" height="1"/>
<rect x="203" y="373" width="1" height="2"/>
<rect x="204" y="372" width="1" height="2"/>
<rect x="205" y="372" width="1" height="2"/>
<rect x="206" y="373" width="1" height="2"/>
<rect x="207" y="373" width="1" height="2"/>
<rect x="208" y="371" width="1" height="3"/>
<rect x="209" y="371" width="1" height="2"/>
<rect x="210" y="372" width="1" height="1"/>
<rect x="211" y="372" width="1" height="1"/>
<rect x="212" y="354" width="1" height="19"/>
<rect x="213" y="372" width="1" height="1"/>
<rect x="214" y="373" width="1" height="1"/>
<rect x="215" y="373" width="1" height="1"/>
<rect x="216" y="372" width="1" height="2"/>
<rect x="217" y="372" width="1" height="1"/>
<rect x="218" y="373" width="1" height="1"/>
<rect x="219" y="373" width="1" height="1"/>
<rect x="220" y="372" width="1" height="1"/>
<rect x="221" y="372" width="1" height="1"/>
<rect x="222" y="373" width="1" height="2"/>
<rect x="223" y="373" width="1" height="1"/>
<rect x="224" y="373" width="1" height="2"/>
<rect x="225" y="373" width="1" height="2"/>
<rect x="226" y="372" width="1" height="2"/>
<rect x="227" y="372" width="1" height="2"/>
<rect x="228" y="371" width="1" height="2"/>
<rect x="229" y="371" width="1" height="2"/>
<rect x="230" y="373" width="1" height="2"/>
<rect x="231" y="372" width="1" height="2"/>
<rect x="232" y="372" width="1" height="1"/>
<rect x="233" y="373" width="1" height="1"/>
<rect x="234" y="373" width="1" height="2"/>
<rect x="235" y="371" width="1" height="3"/>
<rect x="236" y="371" width="1" height="3"/>
<rect x="237" y="373" width="1" height="2"/>
<rect x="238" y="373" width="1" height="1"/>
<rect x="239" y="372" width="1" height="1"/>
<rect x="240" y="372" width="1" height="1"/>
<rect x="241" y="373" width="1" height="2"/>
<rect x="242" y="373" width="1" height="2"/>
<rect x="243" y="373" width="1" height="2"/>
<rect x="244" y="371" width="1" height="3"/>
<rect x="245" y="371" width="1" height="2"/>
<rect x="246" y="371" width="1" height="1"/>
<rect x="247" y="372" width="1" height="1"/>
<rect x="248" y="372" width="1" height="1"/>
<rect x="249" y="372" width="1" height="2"/>
<rect x="250" y="373" width="1" height="1"/>
<rect x="251" y="371" width="1" height="3"/>
<rect x="252" y="371" width="1" height="1"/>
<rect x="253" y="372" width="1" height="2"/>
<rect x="254" y="371" width="1" height="1"/>
<rect x="255" y="371" width="1" height="1"/>
<rect x="256" y="371" width="1" height="2"/>
<rect x="257" y="371" width="1" height="2"/>
<rect x="258" y="371" width="1" height="1"/>
<rect x="259" y="371" width="1" height="1"/>
<rect x="260" y="371" width="1" height="2"/>
<rect x="261" y="372" width="1" height="2"/>
<rect x="262" y="372" width="1" height="1"/>
<rect x="263" y="373" width="1" height="1"/>
<rect x="264" y="372" width="1" height="1"/>
<rect x="265" y="372" width="1" height="1"/>
<rect x="266" y="371" width="1" height="2"/>
<rect x="267" y="371" width="1" height="2"/>
<rect x="268" y="372" width="1" height="1"/>
<rect x="269" y="372" width="1" height="2"/>
<rect x="270" y="371" width="1" height="2"/>
<rect x="271" y="371" width="1" height="2"/>
<rect x="272" y="372" width="1" height="2"/>
<rect x="273" y="371" width="1" height="1"/>
<rect x="274" y="371" width="1" height="2"/>
<rect x="275" y="371" width="1" height="2"/>
<rect x="276" y="371" width="1" height="2"/>
<rect x="277" y="372" width="1" height="2"/>
<rect x="278" y="372" width="1" height="2"/>
<rect x="279" y="373" width="1" height="2"/>
<rect x="280" y="373" width="1" height="1"/>
<rect x="281" y="372" width="1" height="2"/>
<rect x="282" y="372" width="1" height="1"/>
<rect x="283" y="373" width="1" height="2"/>
<rect x="284" y="372" width="1" height="2"/>
<rect x="285" y="371" width="1" height="2"/>
<rect x="286" y="371" width="1" height="2"/>
<rect x="287" y="372" width="1" height="1"/>
<rect x="288" y="372" width="1" height="1"/>
<rect x="289" y="373" width="1" height="1"/>
<rect x="290" y="373" width="1" height="2"/>
<rect x="291" y="372" width="1" height="2"/>
<rect x="292" y="372" width="1" height="1"/>
<rect x="293" y="371" width="1" height="2"/>
<rect x="294" y="371" width="1" height="2"/>
<rect x="295" y="371" width="1" height="2"/>
<rect x="296" y="372" width="1" height="2"/>
<rect x="297" y="371" width="1" height="2"/>
<rect x="298" y="371" width="1" height="2"/>
<rect x="299" y="373" width="1" height="2"/>
<rect x="300" y="372" width="1" height="1"/>
<rect x="301" y="372" width="1" height="2"/>
<rect x="302" y="372" width="1" height="1"/>
<rect x="303" y="372" width="1" height="1"/>
<rect x="304" y="372" width="1" height="2"/>
<rect x="305" y="372" width="1" height="2"/>
<rect x="306" y="372" width="1" height="2"/>
<rect x="307" y="373" width="1" height="2"/>
<rect x="308" y="373" width="1" height="1"/>
<rect x="309" y="372" width="1" height="1"/>
<rect x="310" y="372" width="1" height="3"/>
<rect x="311" y="372" width="1" height="3"/>
<rect x="312" y="372" width="1" height="2"/>
<rect x="313" y="372" width="1" height="2"/>
<rect x="314" y="372" width="1" height="3"/>
<rect x="315" y="372" width="1" height="3"/>
<rect x="316" y="372" width="1" height="1"/>
<rect x="317" y="372" width="1" height="1"/>
<rect x="318" y="371" width="1" height="2"/>
<rect x="319" y="371" width="1" height="2"/>
<rect x="320" y="372" width="1" height="1"/>
<rect x="321" y="372" width="1" height="1"/>
<rect x="322" y="372" width="1" height="1"/>
<rect x="323" y="373" width="1" height="1"/>
<rect x="324" y="371" width="1" height="2"/>
<rect x="325" y="371" width="1" height="1"/>
<rect x="326" y="372" width="1" height="2"/>
<rect x="327" y="372" width="1" height="1"/>
<rect x="328" y="373" width="1" height="1"/>
<rect x="329" y="372" width="1" height="1"/>
<rect x="330" y="372" width="1" height="2"/>
<rect x="331" y="371" width="1" height="2"/>
<rect x="332" y="371" width="1" height="4"/>
<rect x="333" y="372" width="1" height="3"/>
<rect x="334" y="372" width="1" height="1"/>
<rect x="335" y="372" width="1" height="1"/>
<rect x="336" y="372" width="1" height="1"/>
<rect x="337" y="373" width="1" height="2"/>
<rect x="338" y="373" width="1" height="1"/>
<rect x="339" y="371" width="1" height="3"/>
<rect x="340" y="371" width="1" height="2"/>
<rect x="341" y="372" width="1" height="2"/>
<rect x="342" y="372" width="1" height="1"/>
<rect x="343" y="372" width="1" height="1"/>
<rect x="344" y="372" width="1" height="1"/>
<rect x="345" y="372" width="1" height="1"/>
<rect x="346" y="372" width="1" height="1"/>
<rect x="347" y="372" width="1" height="1"/>
<rect x="348" y="372" width="1" height="1"/>
<rect x="349" y="373" width="1" height="1"/>
<rect x="350" y="371" width="1" height="3"/>
<rect x="351" y="371" width="1" height="1"/>
<rect x="352" y="372" width="1" height="1"/>
<rect x="353" y="372" width="1" height="2"/>
<rect x="354" y="373" width="1" height="1"/>
<rect x="355" y="372" width="1" height="1"/>
<rect x="356" y="371" width="1" height="2"/>
<rect x="357" y="371" width="1" height="3"/>
<rect x="358" y="372" width="1" height="2"/>
<rect x="359" y="372" width="1" height="2"/>
<rect x="360" y="372" width="1" height="1"/>
<rect x="361" y="373" width="1" height="1"/>
<rect x="362" y="372" width="1" height="1"/>
<rect x="363" y="372" width="1" height="1"/>
<rect x="364" y="372" width="1" height="2"/>
<rect x="365" y="372" width="1" height="2"/>
<rect x="366" y="372" width="1" height="1"/>
<rect x="367" y="372" width="1" height="1"/>
<rect x="368" y="372" width="1" height="1"/>
<rect x="369" y="372" width="1" height="2"/>
<rect x="370" y="371" width="1" height="2"/>
<rect x="371" y="371" width="1" height="3"/>
<rect x="372" y="373" width="1" height="2"/>
<rect x="373" y="372" width="1" height="2"/>
<rect x="374" y="372" width="1" height="1"/>
<rect x="375" y="372" width="1" height="1"/>
<rect x="376" y="373" width="1" height="2"/>
<rect x="377" y="371" width="1" height="2"/>
<rect x="378" y="371" width="1" height="1"/>
<rect x="379" y="372" width="1" height="2"/>
<rect x="380" y="372" width="1" height="2"/>
<rect x="381" y="372" width="1" height="1"/>
<rect x="382" y="371" width="1" height="1"/>
<rect x="383" y="371" width="1" height="2"/>
<rect x="384" y="373" width="1" height="1"/>
<rect x="385" y="371" width="1" height="3"/>
<rect x="386" y="371" width="1" height="2"/>
<rect x="387" y="372" width="1" height="1"/>
<rect x="388" y="373" width="1" height="1"/>
<rect x="389" y="373" width="1" height="2"/>
<rect x="390" y="371" width="1" height="3"/>
<rect x="391" y="371" width="1" height="2"/>
<rect x="392" y="373" width="1" height="1"/>
<rect x="393" y="374" width="1" height="2"/>
<rect x="394" y="373" width="1" height="2"/>
<rect x="395" y="371" width="1" height="3"/>
<rect x="396" y="371" width="1" height="2"/>
<rect x="397" y="372" width="1" height="1"/>
<rect x="398" y="372" width="1" height="2"/>
<rect x="399" y="373" width="1" height="2"/>
<rect x="400" y="373" width="1" height="1"/>
<rect x="401" y="371" width="1" height="2"/>
<rect x="402" y="371" width="1" height="1"/>
<rect x="403" y="372" width="1" height="1"/>
<rect x="404" y="371" width="1" height="3"/>
<rect x="405" y="371" width="1" height="2"/>
<rect x="406" y="372" width="1" height="1"/>
<rect x="407" y="371" width="1" height="1"/>
<rect x="408" y="371" width="1" height="3"/>
<rect x="409" y="371" width="1" height="2"/>
<rect x="410" y="371" width="1" height="1"/>
<rect x="411" y="371" width="1" height="1"/>
<rect x="412" y="371" width="1" height="2"/>
<rect x="413" y="371" width="1" height="1"/>
<rect x="414" y="371" width="1" height="1"/>
<rect x="415" y="372" width="1" height="1"/>
<rect x="416" y="373" width="1" height="2"/>
<rect x="417" y="371" width="1" height="3"/>
<rect x="418" y="371" width="1" height="2"/>
<rect x="419" y="372" width="1" height="2"/>
<rect x="420" y="372" width="1" height="2"/>
<rect x="421" y="372" width="1" height="1"/>
<rect x="422" y="372" width="1" height="2"/>
<rect x="423" y="372" width="1" height="1"/>
<rect x="424" y="371" width="1" height="1"/>
<rect x="425" y="371" width="1" height="2"/>
<rect x="426" y="371" width="1" height="2"/>
<rect x="427" y="371" width="1" height="2"/>
<rect x="428" y="372" width="1" height="1"/>
<rect x="429" y="372" width="1" height="1"/>
<rect x="430" y="372" width="1" height="1"/>
<rect x="431" y="372" width="1" height="1"/>
<rect x="432" y="372" width="1" height="2"/>
<rect x="433" y="372" width="1" height="2"/>
<rect x="434" y="372" width="1" height="2"/>
<rect x="435" y="372" width="1" height="3"/>
<rect x="436" y="373" width="1" height="2"/>
<rect x="437" y="372" width="1" height="1"/>
<rect x="438" y="372" width="1" height="1"/>
<rect x="439" y="372" width="1" height="1"/>
<rect x="440" y="373" width="1" height="2"/>
<rect x="441" y="372" width="1" height="3"/>
<rect x="442" y="372" width="1" height="1"/>
<rect x="443" y="373" width="1" height="2"/>
<rect x="444" y="372" width="1" height="2"/>
<rect x="445" y="372" width="1" height="1"/>
<rect x="446" y="372" width="1" height="2"/>
<rect x="447" y="372" width="1" height="1"/>
<rect x="448" y="372" width="1" height="1"/>
<rect x="449" y="372" width="1" height="1"/>
<rect x="450" y="372" width="1" height="2"/>
<rect x="451" y="373" width="1" height="2"/>
</g>
<g shape-rendering="crispEdges">
</g>
<text transform="translate(41.3,402.8) scale(.9,1)" text-anchor="end" font-family="Liberation Sans,sans-serif" font-size="12" fill="#000" stroke="#000" stroke-width=".25">2</text>
<text transform="translate(41.3,375.8) scale(.9,1)" text-anchor="end" font-family="Liberation Sans,sans-serif" font-size="12" fill="#000" stroke="#000" stroke-width=".25">4</text>
<text transform="translate(41.3,349.8) scale(.9,1)" text-anchor="end" font-family="Liberation Sans,sans-serif" font-size="12" fill="#000" stroke="#000" stroke-width=".25">6</text>
<text transform="translate(41.3,322.8) scale(.9,1)" text-anchor="end" font-family="Liberation Sans,sans-serif" font-size="12" fill="#000" stroke="#000" stroke-width=".25">8</text>
<text transform="translate(41.3,295.8) scale(.9,1)" text-anchor="end" font-family="Liberation Sans,sans-serif" font-size="12" fill="#000" stroke="#000" stroke-width=".25">10</text>
<text transform="translate(470.6,402.8) scale(.9,1)" font-family="Liberation Sans,sans-serif" font-size="12" fill="#000" stroke="#000" stroke-width=".25">4</text>
<text transform="translate(470.6,375.8) scale(.9,1)" font-family="Liberation Sans,sans-serif" font-size="12" fill="#000" stroke="#000" stroke-width=".25">8</text>
<text transform="translate(470.6,349.8) scale(.9,1)" font-family="Liberation Sans,sans-serif" font-size="12" fill="#000" stroke="#000" stroke-width=".25">12</text>
<text transform="translate(470.6,322.8) scale(.9,1)" font-family="Liberation Sans,sans-serif" font-size="12" fill="#000" stroke="#000" stroke-width=".25">16</text>
<text transform="translate(470.6,295.8) scale(.9,1)" font-family="Liberation Sans,sans-serif" font-size="12" fill="#000" stroke="#000" stroke-width=".25">20</text>
<text transform="translate(50.0,439.8) scale(.9,1)" text-anchor="middle" font-family="Liberation Sans,sans-serif" font-size="12" fill="#000" stroke="#000" stroke-width=".25">0.0</text>
<text transform="translate(96.5,439.8) scale(.9,1)" text-anchor="middle" font-family="Liberation Sans,sans-serif" font-size="12" fill="#000" stroke="#000" stroke-width=".25">0.5</text>
<text transform="translate(142.9,439.8) scale(.9,1)" text-anchor="middle" font-family="Liberation Sans,sans-serif" font-size="12" fill="#000" stroke="#000" stroke-width=".25">1.0</text>
<text transform="translate(189.4,439.8) scale(.9,1)" text-anchor="middle" font-family="Liberation Sans,sans-serif" font-size="12" fill="#000" stroke="#000" stroke-width=".25">1.5</text>
<text transform="translate(235.8,439.8) scale(.9,1)" text-anchor="middle" font-family="Liberation Sans,sans-serif" font-size="12" fill="#000" stroke="#000" stroke-width=".25">2.0</text>
<text transform="translate(282.2,439.8) scale(.9,1)" text-anchor="middle" font-family="Liberation Sans,sans-serif" font-size="12" fill="#000" stroke="#000" stroke-width=".25">2.5</text>
<text transform="translate(328.7,439.8) scale(.9,1)" text-anchor="middle" font-family="Liberation Sans,sans-serif" font-size="12" fill="#000" stroke="#000" stroke-width=".25">3.0</text>
<text transform="translate(375.2,439.8) scale(.9,1)" text-anchor="middle" font-family="Liberation Sans,sans-serif" font-size="12" fill="#000" stroke="#000" stroke-width=".25">3.5</text>
<text transform="translate(421.6,439.8) scale(.9,1)" text-anchor="middle" font-family="Liberation Sans,sans-serif" font-size="12" fill="#000" stroke="#000" stroke-width=".25">4.0</text>
<text transform="translate(468.1,439.8) scale(.9,1)" text-anchor="middle" font-family="Liberation Sans,sans-serif" font-size="12" fill="#000" stroke="#000" stroke-width=".25">4.5</text>
</svg>
<div class="grp" style="left:491px;top:125px;width:139px;height:82px"></div>
<div class="lg" style="left:498px;top:118px;width:46px"></div>
<div id="t15" class="t " style="left:499.8px;top:118.5px;transform:scaleX(0.8998);">Disk-Info</div>
<div id="t16" class="t " style="left:499.4px;top:133px;transform:scaleX(0.9124);">Typ:</div>
<div id="t17" class="t v" style="left:545.2px;top:133px;transform:scaleX(0.8899);">DVD+R</div>
<div id="t18" class="t " style="left:499.4px;top:150.3px;transform:scaleX(0.8342);">ID:</div>
<div id="t19" class="t v" style="left:545.2px;top:150.3px;transform:scaleX(0.9037);">MAXELL 003</div>
<div id="t20" class="t " style="left:499.4px;top:167.6px;transform:scaleX(0.8530);">Datum:</div>
<div id="t21" class="t v" style="left:545.2px;top:167.6px;transform:scaleX(0.9145);">24 Oct 2009</div>
<div id="t22" class="t " style="left:499.4px;top:185.4px;transform:scaleX(0.8776);">Label:</div>
<div class="grp" style="left:491px;top:216px;width:139px;height:203px"></div>
<div class="lg" style="left:498.5px;top:209px;width:67px"></div>
<div id="t23" class="t " style="left:500.4px;top:209.5px;transform:scaleX(0.8742);">Einstellungen</div>
<div class="sunk" style="left:500px;top:225px;width:83px;height:20px"></div>
<div id="t24" class="t " style="left:504.4px;top:229px;transform:scaleX(0.9436);">4 X</div>
<div class="btn2" style="left:566px;top:227px;width:16px;height:16px"></div>
<svg class="a" style="left:570px;top:233px" width="7" height="4"><path d="M0 0h7l-3.5 4z" fill="#000"/></svg>
<div class="btn" style="left:592px;top:224px;width:23px;height:23px"></div>
<svg class="a" style="left:596px;top:227px" width="14" height="16" viewBox="0 0 14 16">
<rect x=".5" y=".5" width="13" height="15" fill="#fff" stroke="#000"/>
<path d="M3.6 8V4.7h3.4" fill="none" stroke="#18a018" stroke-width="1.4"/><path d="M6.4 2.200l3.200 2.500-3.200 2.500z" fill="#008000"/>
<path d="M10.8 7.900v3.300h-3.400" fill="none" stroke="#18a018" stroke-width="1.4"/><path d="M8 8.700l-3.200 2.500 3.200 2.500z" fill="#008000"/>
</svg>
<div id="t25" class="t " style="left:501.8px;top:255px;transform:scaleX(0.8819);">Start:</div>
<div id="t26" class="t " style="left:501.8px;top:278px;transform:scaleX(0.9024);">Ende:</div>
<div class="sunk" style="left:554px;top:251px;width:60px;height:19px"></div>
<div class="sunk" style="left:554px;top:273px;width:60px;height:19px"></div>
<div id="t27" class="t " style="left:557.1px;top:253.5px;transform:scaleX(0.8932);">0000 MB</div>
<div id="t28" class="t " style="left:557.1px;top:276.5px;transform:scaleX(0.8932);">4452 MB</div>
<div class="cb" style="left:502px;top:296px;"></div>
<div id="t29" class="t " style="left:519.9px;top:295.5px;transform:scaleX(0.9032);">Schnelles Scannen</div>
<div class="cb" style="left:502px;top:314px;"></div>
<svg class="a" style="left:505px;top:317px" width="7" height="7" shape-rendering="crispEdges"><path d="M0 2v3l2 2 5-5V-1L2 4z" fill="#000"/></svg>
<div id="t30" class="t " style="left:519.9px;top:313.5px;transform:scaleX(0.9049);">C1/PIE anzeigen</div>
<div class="cb" style="left:502px;top:329px;"></div>
<svg class="a" style="left:505px;top:332px" width="7" height="7" shape-rendering="crispEdges"><path d="M0 2v3l2 2 5-5V-1L2 4z" fill="#000"/></svg>
<div id="t31" class="t " style="left:519.9px;top:328.5px;transform:scaleX(0.9050);">C2/PIF anzeigen</div>
<div class="cb" style="left:502px;top:345px;"></div>
<svg class="a" style="left:505px;top:348px" width="7" height="7" shape-rendering="crispEdges"><path d="M0 2v3l2 2 5-5V-1L2 4z" fill="#000"/></svg>
<div id="t32" class="t " style="left:519.9px;top:344.5px;transform:scaleX(0.8777);">Jitter anzeigen</div>
<div class="cb" style="left:502px;top:361px;"></div>
<svg class="a" style="left:505px;top:364px" width="7" height="7" shape-rendering="crispEdges"><path d="M0 2v3l2 2 5-5V-1L2 4z" fill="#000"/></svg>
<div id="t33" class="t " style="left:519.9px;top:360.5px;transform:scaleX(0.9033);">Zeige Lesegeschw.</div>
<div class="cb" style="left:502px;top:376px;background:#d4d0c8"></div>
<svg class="a" style="left:505px;top:379px" width="7" height="7" shape-rendering="crispEdges"><path d="M0 2v3l2 2 5-5V-1L2 4z" fill="#808080"/></svg>
<div id="t34" class="t " style="left:520.9px;top:376.5px;transform:scaleX(0.9046);color:#fff">Zeige Schreibgeschw.</div>
<div id="t35" class="t " style="left:519.9px;top:375.5px;transform:scaleX(0.9046);color:#808080">Zeige Schreibgeschw.</div>
<div class="btn" style="left:527px;top:393px;width:98px;height:23px"></div>
<div id="t36" class="t " style="left:555.1px;top:397px;transform:scaleX(0.8723);">Erweitert</div>
<div class="grp" style="left:491px;top:426px;width:139px;height:24px"></div>
<div id="t37" class="t " style="left:501.8px;top:431.5px;transform:scaleX(0.8716);">Qualitätsindex:</div>
<div id="t38" class="t r v" style="right:23.5px;top:431.5px;transform:scaleX(1.0255);">99</div>
<div class="grp" style="left:491px;top:457px;width:139px;height:56px"></div>
<div id="t39" class="t " style="left:501.8px;top:466px;transform:scaleX(0.8717);">Fortschritt:</div>
<div id="t40" class="t r v" style="right:23.0px;top:466px;transform:scaleX(0.8845);">100 %</div>
<div id="t41" class="t " style="left:501.8px;top:481.8px;transform:scaleX(0.8733);">Position:</div>
<div id="t42" class="t r v" style="right:23.0px;top:481.8px;transform:scaleX(0.9098);">4451 MB</div>
<div id="t43" class="t " style="left:501.8px;top:496.8px;transform:scaleX(0.8940);">Geschwindigkeit:</div>
<div id="t44" class="t r v" style="right:23.0px;top:496.8px;transform:scaleX(0.9221);">4.18 X</div>
<div class="grp" style="left:14px;top:457px;width:146px;height:56px"></div>
<div class="lg" style="left:23px;top:451px;width:54px"></div>
<div class="a" style="left:24px;top:454px;width:8px;height:8px;background:#00ffff;border:1px solid #000"></div>
<div id="t45" class="t " style="left:35.4px;top:450.6px;transform:scaleX(0.8449);">PI Errors</div>
<div id="t46" class="t " style="left:22.3px;top:467px;transform:scaleX(0.9010);">Durchschnitt</div>
<div id="t47" class="t r v" style="right:495.3px;top:467px;transform:scaleX(0.8690);">0.31</div>
<div id="t48" class="t " style="left:22.3px;top:482px;transform:scaleX(0.8474);">Maximum:</div>
<div id="t49" class="t r v" style="right:494.0px;top:482px;transform:scaleX(0.8972);">6</div>
<div id="t50" class="t " style="left:22.3px;top:497px;transform:scaleX(0.8488);">Gesamt:</div>
<div id="t51" class="t r v" style="right:494.0px;top:497px;transform:scaleX(0.9325);">5450</div>
<div class="grp" style="left:172px;top:457px;width:146px;height:56px"></div>
<div class="lg" style="left:181px;top:451px;width:62px"></div>
<div class="a" style="left:182px;top:454px;width:8px;height:8px;background:#ffff00;border:1px solid #000"></div>
<div id="t52" class="t " style="left:193.4px;top:450.6px;transform:scaleX(0.8543);">PI Failures</div>
<div id="t53" class="t " style="left:181.3px;top:467px;transform:scaleX(0.8965);">Durchschnitt</div>
<div id="t54" class="t r v" style="right:335.1px;top:467px;transform:scaleX(0.9332);">0.00</div>
<div id="t55" class="t " style="left:181.3px;top:482px;transform:scaleX(0.8330);">Maximum:</div>
<div id="t56" class="t r v" style="right:335.1px;top:482px;transform:scaleX(0.9570);">2</div>
<div id="t57" class="t " style="left:181.3px;top:497px;transform:scaleX(0.8400);">Gesamt:</div>
<div id="t58" class="t r v" style="right:335.1px;top:497px;transform:scaleX(0.9435);">210</div>
<div class="grp" style="left:331px;top:457px;width:147px;height:42px"></div>
<div class="lg" style="left:340px;top:451px;width:35px"></div>
<div class="a" style="left:341px;top:454px;width:8px;height:8px;background:#ff00ff;border:1px solid #000"></div>
<div id="t59" class="t " style="left:351.7px;top:450.6px;transform:scaleX(0.8687);">Jitter</div>
<div id="t60" class="t " style="left:339.8px;top:467px;transform:scaleX(0.9085);">Durchschnitt</div>
<div id="t61" class="t r v" style="right:176.3px;top:467px;transform:scaleX(0.8619);">7.62 %</div>
<div id="t62" class="t " style="left:339.8px;top:482px;transform:scaleX(0.8474);">Maximum:</div>
<div id="t63" class="t r v" style="right:176.3px;top:482px;transform:scaleX(0.8887);">10.8 %</div>
<div id="t64" class="t " style="left:339.8px;top:500.5px;transform:scaleX(0.8721);">PO Ausfälle:</div>
<div id="t65" class="t r v" style="right:176.3px;top:500.5px;transform:scaleX(0.9271);">0</div>
</body></html>
